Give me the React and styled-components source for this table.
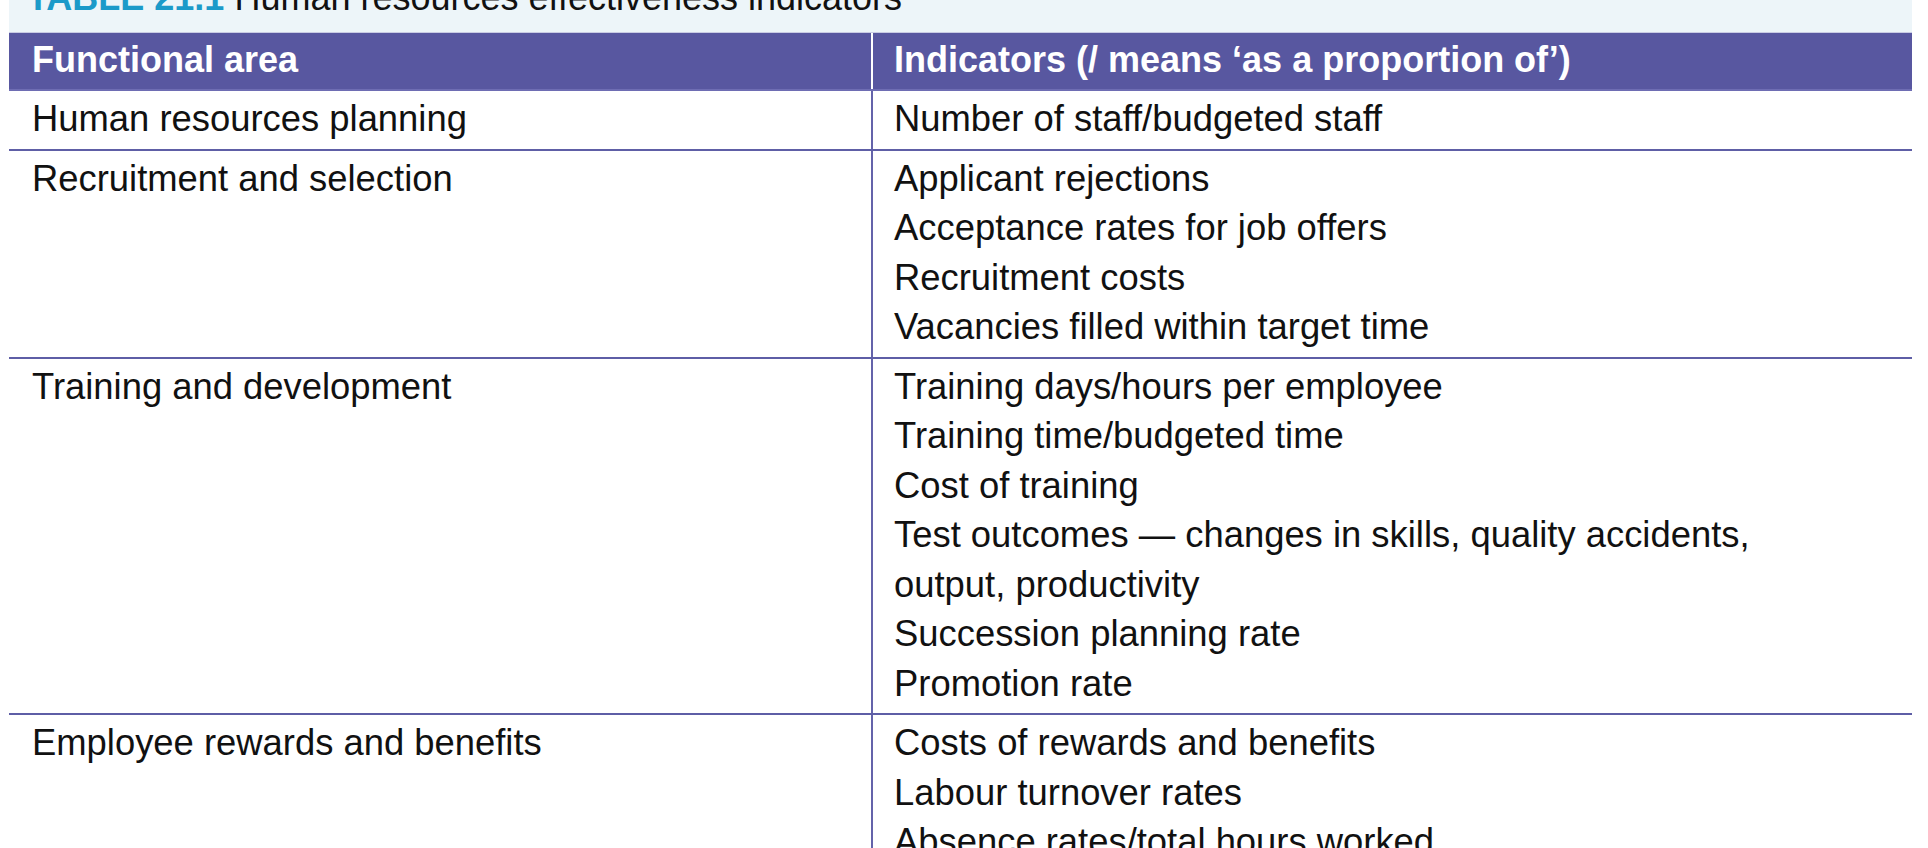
import React from "react";
import styled, { createGlobalStyle } from "styled-components";

const Global = createGlobalStyle`
  html, body {
    margin: 0;
    padding: 0;
    background: #ffffff;
    overflow: hidden;
  }
  body {
    font-family: "Liberation Sans", Arial, Helvetica, sans-serif;
    color: #111111;
  }
`;

const Page = styled.div`
  width: 1903px;
  margin-left: 9px;
  height: 848px;
  overflow: hidden;
`;

const Caption = styled.div`
  height: 32px;
  background: #edf5f9;
  border-bottom: 1px solid #c9cce4;
  overflow: hidden;
  padding-left: 18px;
`;

const CaptionText = styled.div`
  font-size: 36px;
  line-height: 36px;
  margin-top: -20px;
  white-space: nowrap;
  color: #111111;
`;

const CaptionLabel = styled.span`
  font-weight: 700;
  color: #1b9ac9;
`;

const Row = styled.div`
  display: grid;
  grid-template-columns: 862px 1fr;
  background: ${(p) => (p.$head ? "#5857a0" : "#ffffff")};
  border-bottom: ${(p) =>
    p.$head ? "2px solid #6e6db3" : p.$last ? "none" : "2px solid #5e5ea6"};
`;

const Cell = styled.div`
  padding: ${(p) => (p.$head ? "2px 0 5px" : "3px 0 5px")};
  padding-left: ${(p) => (p.$right ? "21px" : "23px")};
  font-size: ${(p) => (p.$head ? "36px" : "36.4px")};
  line-height: ${(p) => (p.$head ? "49px" : "49.5px")};
  font-weight: ${(p) => (p.$head ? 700 : 400)};
  color: ${(p) => (p.$head ? "#ffffff" : "#111111")};
  border-left: ${(p) =>
    p.$right ? (p.$head ? "2px solid #ffffff" : "2px solid #6463aa") : "none"};
`;

const Item = styled.div`
  white-space: nowrap;
`;

const rows = [
  { area: "Human resources planning", items: ["Number of staff/budgeted staff"] },
  {
    area: "Recruitment and selection",
    items: [
      "Applicant rejections",
      "Acceptance rates for job offers",
      "Recruitment costs",
      "Vacancies filled within target time",
    ],
  },
  {
    area: "Training and development",
    items: [
      "Training days/hours per employee",
      "Training time/budgeted time",
      "Cost of training",
      ["Test outcomes \u2014 changes in skills, quality accidents,", "output, productivity"],
      "Succession planning rate",
      "Promotion rate",
    ],
  },
  {
    area: "Employee rewards and benefits",
    items: [
      "Costs of rewards and benefits",
      "Labour turnover rates",
      "Absence rates/total hours worked",
    ],
  },
];

export default function App() {
  return (
    <>
      <Global />
      <Page>
        <Caption>
          <CaptionText>
            <CaptionLabel>TABLE 21.1</CaptionLabel> Human resources effectiveness indicators
          </CaptionText>
        </Caption>
        <Row $head>
          <Cell $head>Functional area</Cell>
          <Cell $head $right>
            Indicators (/ means ‘as a proportion of’)
          </Cell>
        </Row>
        {rows.map((r, i) => (
          <Row key={r.area} $last={i === rows.length - 1}>
            <Cell>{r.area}</Cell>
            <Cell $right>
              {r.items.map((it, j) =>
                Array.isArray(it) ? (
                  it.map((line) => <Item key={line}>{line}</Item>)
                ) : (
                  <Item key={j}>{it}</Item>
                )
              )}
            </Cell>
          </Row>
        ))}
      </Page>
    </>
  );
}
